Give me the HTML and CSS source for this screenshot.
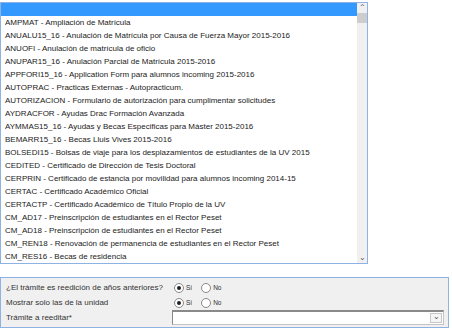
FILE: index.html
```html
<!DOCTYPE html>
<html lang="es">
<head>
    <meta charset="UTF-8">
    <title>Trámites</title>
    <link rel="stylesheet" href="styles.css">
</head>
<body>

    <div class="listbox">
        <div class="options">
            <div class="option selected">&nbsp;</div>
            <div class="option">AMPMAT - Ampliación de Matrícula</div>
            <div class="option">ANUALU15_16 - Anulación de Matrícula por Causa de Fuerza Mayor 2015-2016</div>
            <div class="option">ANUOFI - Anulación de matrícula de oficio</div>
            <div class="option">ANUPAR15_16 - Anulación Parcial de Matrícula 2015-2016</div>
            <div class="option">APPFORI15_16 - Application Form para alumnos incoming 2015-2016</div>
            <div class="option">AUTOPRAC - Practicas Externas - Autopracticum.</div>
            <div class="option">AUTORIZACION - Formulario de autorización para cumplimentar solicitudes</div>
            <div class="option">AYDRACFOR - Ayudas Drac Formación Avanzada</div>
            <div class="option">AYMMAS15_16 - Ayudas y Becas Especificas para Máster 2015-2016</div>
            <div class="option">BEMARR15_16 - Becas Lluis Vives 2015-2016</div>
            <div class="option">BOLSEDI15 - Bolsas de viaje para los desplazamientos de estudiantes de la UV 2015</div>
            <div class="option">CEDITED - Certificado de Dirección de Tesis Doctoral</div>
            <div class="option">CERPRIN - Certificado de estancia por movilidad para alumnos incoming 2014-15</div>
            <div class="option">CERTAC - Certificado Académico Oficial</div>
            <div class="option">CERTACTP - Certificado Académico de Título Propio de la UV</div>
            <div class="option">CM_AD17 - Preinscripción de estudiantes en el Rector Peset</div>
            <div class="option">CM_AD18 - Preinscripción de estudiantes en el Rector Peset</div>
            <div class="option">CM_REN18 - Renovación de permanencia de estudiantes en el Rector Peset</div>
            <div class="option">CM_RES16 - Becas de residencia</div>
        </div>
        <div class="scrollbar">
            <div class="arrow">&#8963;</div>
            <div class="thumb"></div>
            <div class="track"></div>
            <div class="arrow">&#8964;</div>
        </div>
    </div>

    <div class="form-box">
        <div class="form-row">
            <span class="label">¿El trámite es reedición de años anteriores?</span>
            <span class="choices">
                <span class="radio checked"></span><span class="choice">Sí</span>
                <span class="radio"></span><span class="choice">No</span>
            </span>
        </div>
        <div class="form-row">
            <span class="label">Mostrar solo las de la unidad</span>
            <span class="choices">
                <span class="radio checked"></span><span class="choice">Sí</span>
                <span class="radio"></span><span class="choice">No</span>
            </span>
        </div>
        <div class="form-row">
            <span class="label">Trámite a reeditar*</span>
            <div class="combo">
                <div class="combo-value"></div>
                <div class="combo-button">&#8964;</div>
            </div>
        </div>
    </div>

</body>
</html>
```

FILE: styles.css
```css
body {
    margin: 0;
    padding-top: 2px;
    background: white;
    font-family: 'Liberation Sans', Arial, sans-serif;
    color: #222;
}

/* List of procedures */
.listbox {
    display: flex;
    width: 366px;
    border: 1px solid #8db2e3;
}

.options {
    flex: 1;
    font-size: 8px;
}

.option {
    height: 13px;
    line-height: 13px;
    padding-left: 4px;
    white-space: nowrap;
    overflow: hidden;
}

.option.selected {
    background-color: #3399ff;
}

.scrollbar {
    width: 10px;
    display: flex;
    flex-direction: column;
    background: #f0f0f0;
}

.arrow {
    height: 10px;
    line-height: 10px;
    font-size: 8px;
    text-align: center;
    color: #606060;
}

.thumb {
    height: 10px;
    background: #cdcdcd;
}

.track {
    flex: 1;
}

/* Re-edition form */
.form-box {
    margin-top: 13px;
    width: 447px;
    padding: 2px 0 2px;
    background: #f0f0f0;
    border: 1px solid #8db2e3;
}

.form-row {
    display: grid;
    grid-template-columns: 171px 1fr;
    align-items: center;
    height: 15px;
    font-size: 8px;
    color: #333;
}

.label {
    padding-left: 5px;
}

.choices {
    display: flex;
    align-items: center;
    padding-left: 2px;
}

.radio {
    width: 8px;
    height: 8px;
    border: 1px solid #888;
    border-radius: 50%;
    background: white;
    position: relative;
}

.radio.checked::after {
    content: '';
    position: absolute;
    left: 2px;
    top: 2px;
    width: 4px;
    height: 4px;
    border-radius: 50%;
    background: #222;
}

.choice {
    font-size: 6.5px;
    margin: 0 9px 0 2px;
}

.combo {
    display: flex;
    width: 270px;
    height: 12px;
    border: 1px solid #c4c4c4;
    border-top: 2px solid #8a8a8a;
    border-left-color: #8a8a8a;
    background: white;
}

.combo-value {
    flex: 1;
}

.combo-button {
    width: 10px;
    margin: 1px;
    border: 1px solid #c8c8c8;
    background: #f4f4f4;
    color: #555;
    font-size: 8px;
    line-height: 6px;
    text-align: center;
}
```
